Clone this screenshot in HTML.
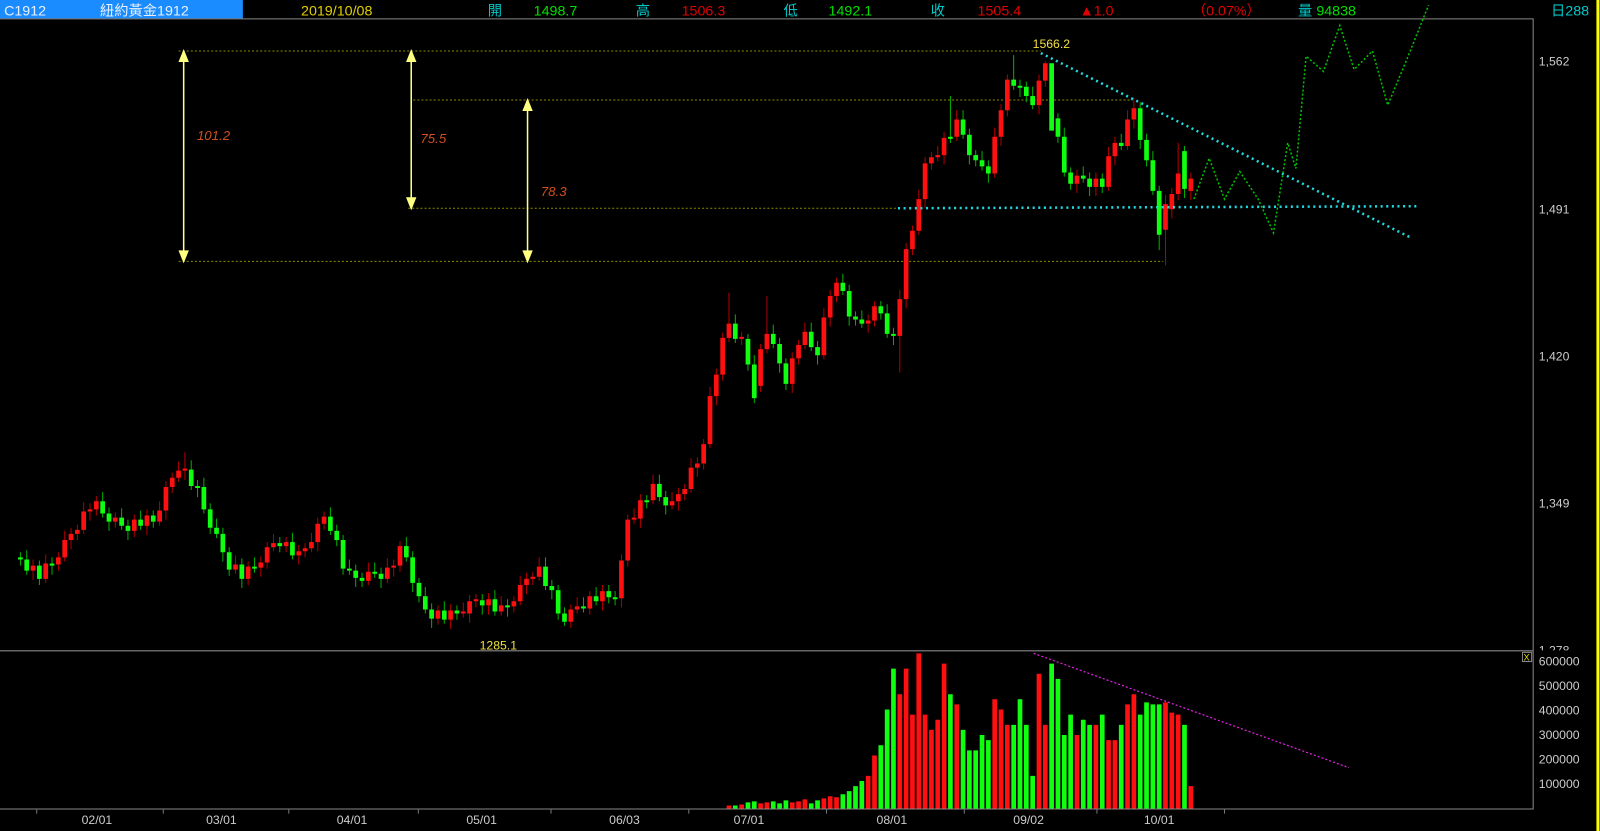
<!DOCTYPE html>
<html><head><meta charset="utf-8"><style>
html,body{margin:0;padding:0;background:#000;overflow:hidden}
svg{display:block}
text{font-family:"Liberation Sans","Noto Sans CJK TC",sans-serif}
</style></head><body>
<svg width="1600" height="831" viewBox="0 0 1568 814" preserveAspectRatio="none" xmlns="http://www.w3.org/2000/svg">
<rect x="0" y="0" width="1568" height="814" fill="#000"/>
<rect x="0" y="0" width="238" height="18" fill="#1a8cff"/>
<g font-size="14">
<text x="4" y="15" fill="#e8f0ff">C1912</text>
<text x="98" y="15" fill="#e8f0ff">紐約黃金1912</text>
<text x="295" y="15" fill="#e0d000">2019/10/08</text>
<text x="478" y="15" fill="#00c8c8">開</text>
<text x="523" y="15" fill="#00e000">1498.7</text>
<text x="623" y="15" fill="#00c8c8">高</text>
<text x="668" y="15" fill="#e00000">1506.3</text>
<text x="768" y="15" fill="#00c8c8">低</text>
<text x="812" y="15" fill="#00e000">1492.1</text>
<text x="912" y="15" fill="#00c8c8">收</text>
<text x="958" y="15" fill="#e00000">1505.4</text>
<text x="1058" y="15" fill="#e00000">▲1.0</text>
<text x="1168" y="15" fill="#e00000">（0.07%）</text>
<text x="1272" y="15" fill="#00c8c8">量</text>
<text x="1290" y="15" fill="#00e000">94838</text>
<text x="1520" y="15" fill="#00c8c8">日288</text>
</g>
<g font-size="12" fill="#ccc">
<text x="1508" y="64">1,562</text><text x="1508" y="209">1,491</text><text x="1508" y="353">1,420</text><text x="1508" y="497">1,349</text><text x="1508" y="641">1,278</text>
</g>
<rect x="1503" y="637" width="60" height="8" fill="#000"/>
<g font-size="12" fill="#ccc">
<text x="1508" y="652">600000</text><text x="1508" y="676">500000</text><text x="1508" y="700">400000</text><text x="1508" y="724">300000</text><text x="1508" y="748">200000</text><text x="1508" y="772">100000</text>
</g>
<path d="M0 18.5H1502.5V792.5H0M0 637.5H1502.5" fill="none" stroke="#888" stroke-width="1"/>
<line x1="1566" y1="0" x2="1566" y2="814" stroke="#ffff00" stroke-width="3"/>
<rect x="1492" y="639" width="9" height="9" fill="none" stroke="#888"/><text x="1493" y="647" font-size="9" fill="#dd0">X</text>
<g font-size="12" fill="#ccc">
<text x="80" y="807">02/01</text><text x="202" y="807">03/01</text><text x="330" y="807">04/01</text><text x="457" y="807">05/01</text><text x="597" y="807">06/03</text><text x="719" y="807">07/01</text><text x="859" y="807">08/01</text><text x="993" y="807">09/02</text><text x="1121" y="807">10/01</text>
</g>
<g stroke="#777" stroke-width="1"><line x1="36" y1="792" x2="36" y2="797"/><line x1="160" y1="792" x2="160" y2="797"/><line x1="283" y1="792" x2="283" y2="797"/><line x1="410" y1="792" x2="410" y2="797"/><line x1="540" y1="792" x2="540" y2="797"/><line x1="675" y1="792" x2="675" y2="797"/><line x1="810" y1="792" x2="810" y2="797"/><line x1="945" y1="792" x2="945" y2="797"/><line x1="1075" y1="792" x2="1075" y2="797"/><line x1="1200" y1="792" x2="1200" y2="797"/></g>
<g stroke="#8a8a00" stroke-width="1" stroke-dasharray="2,2">
<line x1="175" y1="50" x2="1020" y2="50"/><line x1="405" y1="98" x2="1110" y2="98"/><line x1="400" y1="204" x2="880" y2="204"/><line x1="175" y1="256" x2="1140" y2="256"/>
</g>
<g stroke="#ffff80" stroke-width="1.5" fill="#ffff80">
<line x1="180" y1="54" x2="180" y2="252"/><path d="M176 60L180 50L184 60Z M176 246L180 256L184 246Z"/>
<line x1="403" y1="54" x2="403" y2="200"/><path d="M399 60L403 50L407 60Z M399 194L403 204L407 194Z"/>
<line x1="517" y1="102" x2="517" y2="252"/><path d="M513 108L517 98L521 108Z M513 246L517 256L521 246Z"/>
</g>
<g font-size="13" fill="#d05020" font-style="italic">
<text x="193" y="137">101.2</text><text x="412" y="140">75.5</text><text x="530" y="192">78.3</text>
</g>
<!-- red wicks -->
<path fill="none" stroke="#b00000" stroke-width="1" d="M32.4 548V568M44.8 543V571M57.2 541V559M63.4 520V550M69.6 517V538M75.8 514V529M82 492V523M88.2 493V510M94.4 486V505M113 502V517M131.6 504V526M144 499V524M156.4 491V515M162.6 471V509M168.8 463V483M175 452V472M181.2 443V470M230.8 544V562M243.2 550V573M255.6 545V565M261.8 531V557M268 523V540M280.4 526V541M292.8 534V553M299 532V546M305.2 522V541M311.4 507V540M317.6 501V519M361 551V573M379.6 547V571M385.8 548V565M392 530V560M429.2 593V612M441.6 592V616M454 590V605M460.2 583V610M466.4 582V595M478.8 581V602M491.2 584V603M503.6 584V600M509.8 564V593M516 561V582M522.2 560V573M528.4 546V569M559.4 592V615M565.6 585V601M578 579V602M590.4 573V598M609 543V595M615.2 504V555M621.4 498V513M627.6 484V517M640 465V494M658.6 482V499M664.8 478V500M671 474V490M677.2 449V483M683.4 448V467M689.6 430V460M695.8 379V439M702 361V397M708.2 326V373M714.4 287V335M726.8 325V338M745.4 337V384M751.6 290V346M776.4 345V385M782.6 333V357M788.8 316V342M807.4 302V352M813.6 284V320M819.8 272V296M850.8 308V326M857 295V320M881.8 284V365M888 238V302M894.2 221V250M900.4 186V230M906.6 154V204M912.8 149V166M919 143V158M925.2 129V161M937.6 108V138M974.8 125V174M981 102V143M987.2 73V114M1018.2 73V112M1024.4 60V85M1055.4 166V189M1074 169V192M1086.4 144V187M1092.6 134V162M1105 108V147M1111.2 96V126M1142.2 191V260M1148.4 184V214M1154.6 140V196M1167 169V196"/>
<!-- green wicks -->
<path fill="none" stroke="#00b000" stroke-width="1" d="M20 541V554M26.2 539V563M38.6 549V573M51 546V563M100.6 482V507M106.8 497V520M119.2 498V519M125.4 509V529M137.8 500V519M150.2 500V517M187.4 451V480M193.6 470V487M199.8 468V503M206 493V523M212.2 508V527M218.4 517V550M224.6 536V564M237 547V576M249.4 546V561M274.2 526V541M286.6 522V548M323.8 497V524M330 514V535M336.2 524V563M342.4 548V563M348.6 553V575M354.8 561V575M367.2 551V566M373.4 556V576M398.2 526V550M404.4 540V580M410.6 566V590M416.8 575V601M423 591V615M435.4 589V611M447.8 593V607M472.6 582V602M485 578V603M497.4 587V604M534.6 546V578M540.8 568V587M547 573V607M553.2 595V613M571.8 585V600M584.2 575V593M596.6 573V591M602.8 579V593M633.8 485V498M646.2 465V491M652.4 481V504M720.6 308V336M733 327V363M739.2 348V395M757.8 318V341M764 331V365M770.2 351V382M795 316V344M801.2 334V357M826 268V289M832.2 279V319M838.4 305V319M844.6 304V321M863.2 295V313M869.4 298V331M875.6 321V338M931.4 94V140M943.8 108V136M950 126V161M956.2 147V163M962.4 148V167M968.6 157V179M993.4 54V88M999.6 78V95M1005.8 80V100M1012 85V107M1030.6 65V125M1036.8 111V140M1043 125V173M1049.2 164V186M1061.6 163V179M1067.8 169V192M1080.2 170V189M1098.8 131V147M1117.4 100V146M1123.6 131V163M1129.8 148V191M1136 182V245M1160.8 143V194"/>
<!-- red bodies -->
<path fill="#ff1010" d="M30.1 554h4.6V559h-4.6zM42.5 552h4.6V567h-4.6zM54.9 546h4.6V553h-4.6zM61.1 529h4.6V546h-4.6zM67.3 523h4.6V529h-4.6zM73.5 519h4.6V523h-4.6zM79.7 501h4.6V519h-4.6zM85.9 499h4.6V501h-4.6zM92.1 491h4.6V499h-4.6zM110.7 507h4.6V511h-4.6zM129.3 509h4.6V520h-4.6zM141.7 505h4.6V515h-4.6zM154.1 500h4.6V511h-4.6zM160.3 477h4.6V500h-4.6zM166.5 468h4.6V477h-4.6zM172.7 461h4.6V468h-4.6zM178.9 459h4.6V461h-4.6zM228.5 553h4.6V558h-4.6zM240.9 555h4.6V567h-4.6zM253.3 551h4.6V556h-4.6zM259.5 536h4.6V551h-4.6zM265.7 532h4.6V536h-4.6zM278.1 531h4.6V535h-4.6zM290.5 540h4.6V544h-4.6zM296.7 537h4.6V540h-4.6zM302.9 531h4.6V537h-4.6zM309.1 513h4.6V531h-4.6zM315.3 506h4.6V513h-4.6zM358.7 560h4.6V569h-4.6zM377.3 556h4.6V567h-4.6zM383.5 554h4.6V556h-4.6zM389.7 535h4.6V554h-4.6zM426.9 598h4.6V606h-4.6zM439.3 598h4.6V607h-4.6zM451.7 599h4.6V601h-4.6zM457.9 589h4.6V601h-4.6zM464.1 587h4.6V589h-4.6zM476.5 587h4.6V593h-4.6zM488.9 593h4.6V599h-4.6zM501.3 589h4.6V594h-4.6zM507.5 573h4.6V589h-4.6zM513.7 567h4.6V573h-4.6zM519.9 565h4.6V567h-4.6zM526.1 555h4.6V565h-4.6zM557.1 597h4.6V609h-4.6zM563.3 594h4.6V597h-4.6zM575.7 584h4.6V596h-4.6zM588.1 579h4.6V589h-4.6zM606.7 549h4.6V586h-4.6zM612.9 509h4.6V549h-4.6zM619.1 507h4.6V509h-4.6zM625.3 490h4.6V508h-4.6zM637.7 474h4.6V490h-4.6zM656.3 491h4.6V495h-4.6zM662.5 484h4.6V491h-4.6zM668.7 479h4.6V484h-4.6zM674.9 458h4.6V479h-4.6zM681.1 454h4.6V458h-4.6zM687.3 435h4.6V454h-4.6zM693.5 388h4.6V435h-4.6zM699.7 367h4.6V388h-4.6zM705.9 331h4.6V367h-4.6zM712.1 317h4.6V331h-4.6zM724.5 330h4.6V332h-4.6zM743.1 342h4.6V378h-4.6zM749.3 327h4.6V342h-4.6zM774.1 351h4.6V376h-4.6zM780.3 338h4.6V351h-4.6zM786.5 325h4.6V338h-4.6zM805.1 311h4.6V348h-4.6zM811.3 290h4.6V311h-4.6zM817.5 277h4.6V290h-4.6zM848.5 314h4.6V317h-4.6zM854.7 300h4.6V314h-4.6zM879.5 293h4.6V329h-4.6zM885.7 244h4.6V293h-4.6zM891.9 226h4.6V244h-4.6zM898.1 195h4.6V226h-4.6zM904.3 160h4.6V195h-4.6zM910.5 154h4.6V160h-4.6zM916.7 152h4.6V154h-4.6zM922.9 135h4.6V152h-4.6zM935.3 117h4.6V134h-4.6zM972.5 134h4.6V170h-4.6zM978.7 108h4.6V134h-4.6zM984.9 78h4.6V108h-4.6zM1015.9 79h4.6V103h-4.6zM1022.1 62h4.6V79h-4.6zM1053.1 172h4.6V180h-4.6zM1071.7 175h4.6V183h-4.6zM1084.1 153h4.6V183h-4.6zM1090.3 140h4.6V153h-4.6zM1102.7 117h4.6V143h-4.6zM1108.9 106h4.6V117h-4.6zM1139.9 200h4.6V225h-4.6zM1146.1 190h4.6V205h-4.6zM1152.3 170h4.6V190h-4.6zM1164.7 175h4.6V187h-4.6z"/>
<!-- green bodies -->
<path fill="#10ff10" d="M17.7 546h4.6V548h-4.6zM23.9 548h4.6V559h-4.6zM36.3 554h4.6V567h-4.6zM48.7 552h4.6V554h-4.6zM98.3 491h4.6V503h-4.6zM104.5 503h4.6V511h-4.6zM116.9 507h4.6V515h-4.6zM123.1 515h4.6V520h-4.6zM135.5 509h4.6V515h-4.6zM147.9 505h4.6V511h-4.6zM185.1 460h4.6V476h-4.6zM191.3 476h4.6V478h-4.6zM197.5 477h4.6V499h-4.6zM203.7 499h4.6V517h-4.6zM209.9 517h4.6V523h-4.6zM216.1 523h4.6V541h-4.6zM222.3 541h4.6V558h-4.6zM234.7 553h4.6V567h-4.6zM247.1 555h4.6V557h-4.6zM271.9 532h4.6V535h-4.6zM284.3 531h4.6V544h-4.6zM321.5 506h4.6V520h-4.6zM327.7 520h4.6V529h-4.6zM333.9 529h4.6V557h-4.6zM340.1 557h4.6V559h-4.6zM346.3 559h4.6V566h-4.6zM352.5 566h4.6V569h-4.6zM364.9 560h4.6V562h-4.6zM371.1 562h4.6V567h-4.6zM395.9 535h4.6V546h-4.6zM402.1 546h4.6V571h-4.6zM408.3 571h4.6V584h-4.6zM414.5 584h4.6V597h-4.6zM420.7 597h4.6V606h-4.6zM433.1 598h4.6V607h-4.6zM445.5 598h4.6V601h-4.6zM470.3 588h4.6V593h-4.6zM482.7 587h4.6V599h-4.6zM495.1 593h4.6V595h-4.6zM532.3 555h4.6V574h-4.6zM538.5 574h4.6V578h-4.6zM544.7 578h4.6V601h-4.6zM550.9 601h4.6V609h-4.6zM569.5 594h4.6V596h-4.6zM581.9 584h4.6V589h-4.6zM594.3 579h4.6V585h-4.6zM600.5 585h4.6V587h-4.6zM631.5 490h4.6V492h-4.6zM643.9 474h4.6V487h-4.6zM650.1 487h4.6V495h-4.6zM718.3 317h4.6V332h-4.6zM730.7 332h4.6V357h-4.6zM736.9 357h4.6V390h-4.6zM755.5 327h4.6V337h-4.6zM761.7 337h4.6V356h-4.6zM767.9 356h4.6V376h-4.6zM792.7 325h4.6V340h-4.6zM798.9 340h4.6V348h-4.6zM823.7 277h4.6V285h-4.6zM829.9 285h4.6V310h-4.6zM836.1 310h4.6V313h-4.6zM842.3 313h4.6V317h-4.6zM860.9 300h4.6V307h-4.6zM867.1 307h4.6V327h-4.6zM873.3 327h4.6V329h-4.6zM929.1 134h4.6V136h-4.6zM941.5 117h4.6V132h-4.6zM947.7 132h4.6V152h-4.6zM953.9 152h4.6V157h-4.6zM960.1 157h4.6V163h-4.6zM966.3 163h4.6V170h-4.6zM991.1 78h4.6V84h-4.6zM997.3 84h4.6V86h-4.6zM1003.5 85h4.6V94h-4.6zM1009.7 94h4.6V103h-4.6zM1028.3 62h4.6V128h-4.6zM1034.5 116h4.6V134h-4.6zM1040.7 134h4.6V169h-4.6zM1046.9 169h4.6V180h-4.6zM1059.3 172h4.6V175h-4.6zM1065.5 175h4.6V183h-4.6zM1077.9 175h4.6V183h-4.6zM1096.5 140h4.6V143h-4.6zM1115.1 106h4.6V137h-4.6zM1121.3 137h4.6V157h-4.6zM1127.5 157h4.6V187h-4.6zM1133.7 187h4.6V230h-4.6zM1158.5 148h4.6V185h-4.6z"/>
<!-- volume red -->
<path fill="#ff1010" d="M712.1 789h4.6V792h-4.6zM724.5 788h4.6V792h-4.6zM743.1 787h4.6V792h-4.6zM749.3 786h4.6V792h-4.6zM774.1 786h4.6V792h-4.6zM780.3 785h4.6V792h-4.6zM786.5 783h4.6V792h-4.6zM805.1 782h4.6V792h-4.6zM811.3 780h4.6V792h-4.6zM817.5 781h4.6V792h-4.6zM848.5 760h4.6V792h-4.6zM854.7 740h4.6V792h-4.6zM879.5 680h4.6V792h-4.6zM885.7 655h4.6V792h-4.6zM891.9 700h4.6V792h-4.6zM898.1 640h4.6V792h-4.6zM904.3 700h4.6V792h-4.6zM910.5 715h4.6V792h-4.6zM916.7 705h4.6V792h-4.6zM922.9 650h4.6V792h-4.6zM935.3 690h4.6V792h-4.6zM972.5 685h4.6V792h-4.6zM978.7 695h4.6V792h-4.6zM984.9 710h4.6V792h-4.6zM1015.9 660h4.6V792h-4.6zM1022.1 710h4.6V792h-4.6zM1053.1 720h4.6V792h-4.6zM1071.7 710h4.6V792h-4.6zM1084.1 725h4.6V792h-4.6zM1090.3 725h4.6V792h-4.6zM1102.7 690h4.6V792h-4.6zM1108.9 680h4.6V792h-4.6zM1139.9 688h4.6V792h-4.6zM1146.1 698h4.6V792h-4.6zM1152.3 700h4.6V792h-4.6zM1164.7 770h4.6V792h-4.6z"/>
<!-- volume green -->
<path fill="#10ff10" d="M718.3 789h4.6V792h-4.6zM730.7 786h4.6V792h-4.6zM736.9 785h4.6V792h-4.6zM755.5 785h4.6V792h-4.6zM761.7 787h4.6V792h-4.6zM767.9 784h4.6V792h-4.6zM792.7 787h4.6V792h-4.6zM798.9 784h4.6V792h-4.6zM823.7 778h4.6V792h-4.6zM829.9 775h4.6V792h-4.6zM836.1 770h4.6V792h-4.6zM842.3 765h4.6V792h-4.6zM860.9 730h4.6V792h-4.6zM867.1 695h4.6V792h-4.6zM873.3 655h4.6V792h-4.6zM929.1 680h4.6V792h-4.6zM941.5 715h4.6V792h-4.6zM947.7 735h4.6V792h-4.6zM953.9 735h4.6V792h-4.6zM960.1 720h4.6V792h-4.6zM966.3 725h4.6V792h-4.6zM991.1 710h4.6V792h-4.6zM997.3 685h4.6V792h-4.6zM1003.5 710h4.6V792h-4.6zM1009.7 760h4.6V792h-4.6zM1028.3 650h4.6V792h-4.6zM1034.5 665h4.6V792h-4.6zM1040.7 720h4.6V792h-4.6zM1046.9 700h4.6V792h-4.6zM1059.3 705h4.6V792h-4.6zM1065.5 710h4.6V792h-4.6zM1077.9 700h4.6V792h-4.6zM1096.5 710h4.6V792h-4.6zM1115.1 700h4.6V792h-4.6zM1121.3 688h4.6V792h-4.6zM1127.5 690h4.6V792h-4.6zM1133.7 690h4.6V792h-4.6zM1158.5 710h4.6V792h-4.6z"/>
<g fill="none" stroke-width="2.5" stroke-dasharray="2,3.5" stroke="#20d8e0">
<line x1="1020" y1="52" x2="1383" y2="233"/><line x1="880" y1="204" x2="1388" y2="202"/>
</g>
<polyline fill="none" stroke="#00c000" stroke-width="1.5" stroke-dasharray="2,2" points="1170,195 1185,155 1200,195 1215,168 1233,195 1248,228 1262,140 1270,165 1280,55 1297,70 1313,25 1327,68 1345,50 1360,103 1380,55 1400,5"/>
<line x1="1013" y1="640" x2="1322" y2="752" stroke="#e020e0" stroke-width="1.2" stroke-dasharray="2,2"/>
<text x="1012" y="47" font-size="12" fill="#f0e040">1566.2</text>
<text x="470" y="636" font-size="12" fill="#f0e040">1285.1</text>
</svg>
</body></html>
